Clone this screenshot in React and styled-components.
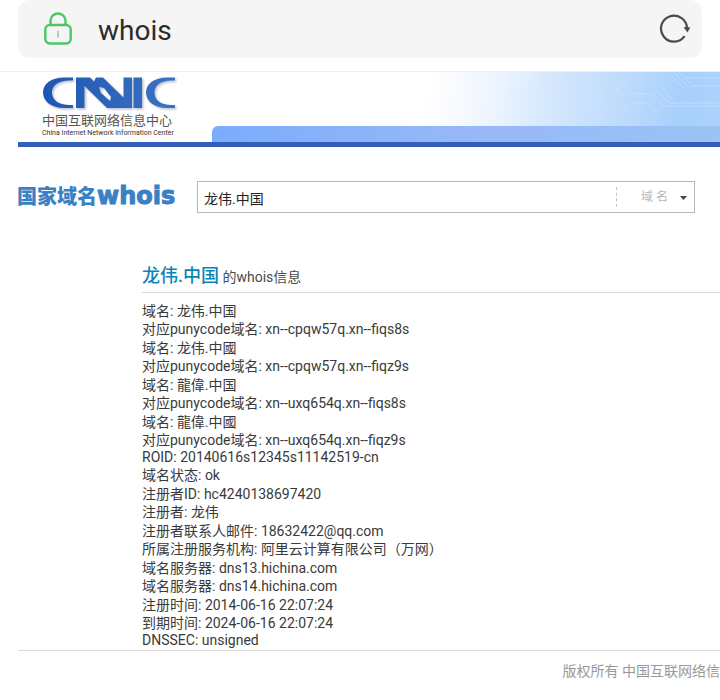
import { useState } from 'react'
import styled, { createGlobalStyle } from 'styled-components'

const RECORDS = [
    ['域名', '龙伟.中国'],
    ['对应punycode域名', 'xn--cpqw57q.xn--fiqs8s'],
    ['域名', '龙伟.中國'],
    ['对应punycode域名', 'xn--cpqw57q.xn--fiqz9s'],
    ['域名', '龍偉.中国'],
    ['对应punycode域名', 'xn--uxq654q.xn--fiqs8s'],
    ['域名', '龍偉.中國'],
    ['对应punycode域名', 'xn--uxq654q.xn--fiqz9s'],
    ['ROID', '20140616s12345s11142519-cn'],
    ['域名状态', 'ok'],
    ['注册者ID', 'hc4240138697420'],
    ['注册者', '龙伟'],
    ['注册者联系人邮件', '18632422@qq.com'],
    ['所属注册服务机构', '阿里云计算有限公司（万网）'],
    ['域名服务器', 'dns13.hichina.com'],
    ['域名服务器', 'dns14.hichina.com'],
    ['注册时间', '2014-06-16 22:07:24'],
    ['到期时间', '2024-06-16 22:07:24'],
    ['DNSSEC', 'unsigned'],
]

const isLatin = (text) => /^[A-Z]+$/.test(text)

const LockIcon = () => (
    <svg width="28" height="34" viewBox="0 0 28 34" fill="none" aria-hidden="true">
        <path
            d="M6.5 13V8.5a7.5 7 0 0 1 15 0V13"
            stroke="#4cc764"
            strokeWidth="2.4"
        />
        <rect
            x="1.3"
            y="13"
            width="25.4"
            height="18.5"
            rx="4.5"
            stroke="#4cc764"
            strokeWidth="2.4"
        />
        <path d="M14 19v6.5" stroke="#a3d8ae" strokeWidth="2" />
    </svg>
)

const ReloadIcon = () => (
    <svg width="32" height="30" viewBox="0 0 32 30" fill="none" aria-hidden="true">
        <path
            d="M25.6 22.2A13 13 0 1 1 28 14"
            stroke="#4a4a4a"
            strokeWidth="2.2"
        />
        <path d="M24.5 13.2h6.8l-2.8 5.2z" fill="#4a4a4a" />
    </svg>
)

const CnnicLogo = () => (
    <svg width="136" height="36" viewBox="0 0 136 36" role="img" aria-label="CNNIC">
        <defs>
            <linearGradient
                id="mark"
                gradientUnits="userSpaceOnUse"
                x1="0"
                y1="0"
                x2="134"
                y2="0"
            >
                <stop offset="0" stopColor="#1f56b2" />
                <stop offset="1" stopColor="#3a72c4" />
            </linearGradient>
            <filter id="markShadow" x="-5%" y="-10%" width="115%" height="130%">
                <feDropShadow
                    dx="1.5"
                    dy="1.5"
                    stdDeviation="0.8"
                    floodColor="#8494ae"
                    floodOpacity="0.6"
                />
            </filter>
        </defs>
        <g fill="url(#mark)" filter="url(#markShadow)">
            <path d="M31 1.500H22C9 1.500 1 8 1 16.500S9 32 22 32h9v-3h-3C16 29 10 23.500 10 16.500S16 4.500 28 4.500h3z" />
            <path
                fillRule="evenodd"
                d="M34 1.500h14l4 4 2-4h7l20.500 20V1.500H90V32H65L42.500 10v22H34zM57 11l2 6 9 8 1-4-7-9z"
            />
            <path d="M91.500 1.500h8.500V32h-8.500z" />
            <path d="M133 1.500h-8c-13 0-21 6.500-21 15S112 32 125 32h8v-3h-3c-12 0-17.500-5.500-17.500-12.500S118 4.500 130 4.500h3z" />
        </g>
    </svg>
)

const CircuitLines = () => (
    <Circuit viewBox="0 0 110 54" fill="none" aria-hidden="true">
        <g stroke="#d3e8fd" strokeWidth="1" opacity="0.5">
            <circle cx="13" cy="17" r="6" />
            <path d="M20 22h24l10 12h56M22 31h16l9 9M46 17l13 14h51M51 15l12 13M60 3l13 13M64 1l14 14M68 0l12 12M80 14h30M8 34h10M74 6h36" />
        </g>
    </Circuit>
)

const App = () => {
    const [domain, setDomain] = useState('龙伟.中国')

    return (
        <Page>
            <GlobalStyle />
            <BrowserBar>
                <AddressBox>
                    <LockIcon />
                    <AddressText>whois</AddressText>
                    <ReloadButton type="button" aria-label="刷新">
                        <ReloadIcon />
                    </ReloadButton>
                </AddressBox>
            </BrowserBar>
            <Header>
                <Brand>
                    <CnnicLogo />
                    <BrandName>中国互联网络信息中心</BrandName>
                    <BrandCaption>China Internet Network Information Center</BrandCaption>
                </Brand>
                <Banner>
                    <BannerArt>
                        <CircuitLines />
                    </BannerArt>
                    <BannerStrip />
                </Banner>
            </Header>
            <SearchForm onSubmit={(e) => e.preventDefault()}>
                <SearchLabel htmlFor="domain">
                    国家域名<SearchLabelLatin>whois</SearchLabelLatin>
                </SearchLabel>
                <SearchBox>
                    <SearchInput
                        id="domain"
                        value={domain}
                        onChange={(e) => setDomain(e.target.value)}
                    />
                    <TypeField>
                        <TypeSelect aria-label="查询类型">
                            <option>域 名</option>
                        </TypeSelect>
                        <Caret width="7" height="4" viewBox="0 0 7 4" aria-hidden="true">
                            <path d="M0 0h7L3.500 4z" fill="#444" />
                        </Caret>
                    </TypeField>
                </SearchBox>
            </SearchForm>
            <Result>
                <ResultTitle>
                    <DomainName>龙伟.中国</DomainName> 的whois信息
                </ResultTitle>
                <RecordList>
                    {RECORDS.map(([name, value], index) => (
                        <Record key={index} $latin={isLatin(name)}>
                            {name}: {value}
                        </Record>
                    ))}
                </RecordList>
            </Result>
            <Footer>版权所有 中国互联网络信</Footer>
        </Page>
    )
}

export default App

const GlobalStyle = createGlobalStyle`
    * {
        box-sizing: border-box;
    }

    body {
        margin: 0;
        background: #fff;
        color: #3a3a3a;
        font-family: Roboto, 'Noto Sans CJK SC', sans-serif;
        font-size: 14px;
    }
`

const Page = styled.div`
    overflow: hidden;
`

const BrowserBar = styled.div`
    padding: 0 18px 13px;
    border-bottom: 1px solid #eef1f3;
`

const AddressBox = styled.div`
    display: flex;
    align-items: center;
    height: 58px;
    padding: 0 11px 0 26px;
    border-radius: 12px;
    background: #f5f5f5;
`

const AddressText = styled.div`
    flex: 1;
    padding: 3px 0 0 26px;
    font-size: 28px;
    line-height: 34px;
    color: #2b2b2b;
`

const ReloadButton = styled.button`
    display: flex;
    padding: 0;
    border: 0;
    background: none;
    cursor: pointer;
`

const Header = styled.header`
    display: flex;
    height: 75px;
    margin-left: 18px;
    border-bottom: 5px solid #345fb8;
`

const Brand = styled.div`
    display: flex;
    flex-direction: column;
    width: 194px;
    padding: 4px 0 0 24px;
    white-space: nowrap;
`

const BrandName = styled.div`
    font-size: 13px;
    line-height: 17px;
    color: #555;
`

const BrandCaption = styled.div`
    font-size: 7px;
    line-height: 8px;
    color: #333;
`

const Banner = styled.div`
    display: flex;
    flex: 1;
    flex-direction: column;
`

const BannerArt = styled.div`
    position: relative;
    flex: 1;
    background: linear-gradient(
        95deg,
        #fff 42%,
        #f0f6fe 54%,
        #d2e6fd 68%,
        #bcdafc 82%,
        #a8d0fb 92%,
        #acd2fc 100%
    );
`

const Circuit = styled.svg`
    position: absolute;
    top: 0;
    right: 0;
    height: 100%;
`

const BannerStrip = styled.div`
    height: 16px;
    border-radius: 6px 0 0 0;
    background: linear-gradient(90deg, #7bacfc, #97b8f8 50%, #9bc3f5);
`

const SearchForm = styled.form`
    display: flex;
    align-items: center;
    gap: 16px;
    padding: 33px 25px 0 17px;
`

const SearchLabel = styled.label`
    width: 164px;
    font-size: 20px;
    font-weight: 900;
    line-height: 32px;
    color: #3a80c4;
    white-space: nowrap;
`

const SearchLabelLatin = styled.span`
    font-family: 'DejaVu Sans', sans-serif;
    font-size: 24px;
    -webkit-text-stroke: 1px #3a80c4;
`

const SearchBox = styled.div`
    display: flex;
    flex: 1;
    align-items: center;
    height: 32px;
    border: 1px solid #b8b8b8;
`

const SearchInput = styled.input`
    flex: 1;
    min-width: 0;
    padding: 2px 6px 0;
    border: 0;
    outline: 0;
    background: none;
    font: inherit;
    color: #222;
`

const TypeField = styled.div`
    position: relative;
    border-left: 1px dashed #c4c4c4;
`

const TypeSelect = styled.select`
    display: block;
    width: 77px;
    height: 20px;
    padding: 0 0 0 24px;
    border: 0;
    appearance: none;
    background: none;
    font: inherit;
    font-size: 12px;
    color: #b8b8b8;
`

const Caret = styled.svg`
    position: absolute;
    top: 9px;
    right: 7px;
    pointer-events: none;
`

const Result = styled.main`
    padding: 48px 0 0 142px;
`

const ResultTitle = styled.h1`
    margin: 0;
    border-bottom: 1px solid #d4dbe0;
    font-size: 14px;
    font-weight: 400;
    line-height: 30px;
    color: #4a4a4a;
`

const DomainName = styled.span`
    font-size: 18px;
    font-weight: 500;
    color: #0b84b8;
`

const RecordList = styled.ul`
    margin: 0;
    padding: 9px 0 1px;
    list-style: none;
`

const Record = styled.li`
    padding-bottom: ${({ $latin }) => ($latin ? '2px' : '0')};
    line-height: ${({ $latin }) => ($latin ? '14px' : '18px')};

    &:nth-child(even) {
        line-height: 19px;
    }
`

const Footer = styled.footer`
    display: flex;
    justify-content: flex-end;
    margin-left: 18px;
    padding-top: 10px;
    border-top: 1px solid #dcdcdc;
    line-height: 20px;
    color: #999;
    white-space: nowrap;
`
